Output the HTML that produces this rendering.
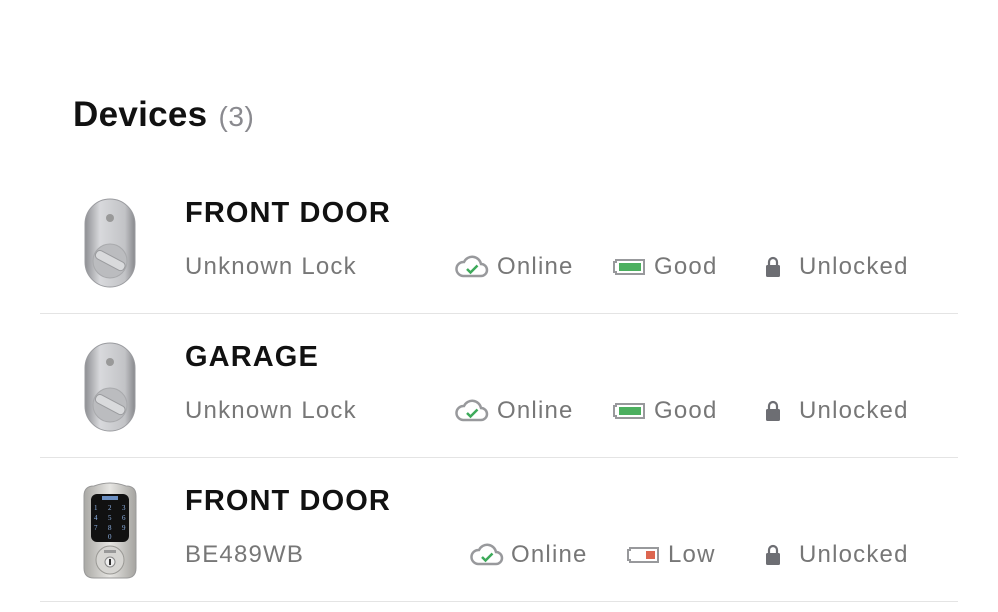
<!DOCTYPE html><html><head><style>
body{margin:0;width:998px;height:612px;background:#fff;font-family:"Liberation Sans",sans-serif;position:relative;overflow:hidden}
.a{position:absolute;white-space:nowrap}
.t{left:73px;top:95px;font-size:35px;font-weight:bold;color:#111;letter-spacing:0.3px}
.t span{font-weight:normal;color:#8a8a8f;font-size:28px;letter-spacing:0.6px;margin-left:11px}
.n{font-size:29px;font-weight:bold;color:#111;letter-spacing:1.1px}
.s{font-size:24px;color:#777;letter-spacing:1.2px}
.hr{position:absolute;left:40px;width:918px;height:1px;background:#e4e4e4}
</style></head><body>
<div class="a t">Devices<span>(3)</span></div>

<svg width="0" height="0" style="position:absolute"><defs>
<g id="lk"><linearGradient id="g1" x1="0" x2="1"><stop offset="0" stop-color="#8e8f93"/><stop offset=".3" stop-color="#d8d9dc"/><stop offset=".8" stop-color="#c2c3c6"/><stop offset="1" stop-color="#88898d"/></linearGradient>
<rect x="1" y="1" width="50" height="88" rx="25" fill="url(#g1)" stroke="#9a9b9f"/>
<circle cx="26" cy="20" r="4" fill="#999"/>
<circle cx="26" cy="63" r="17" fill="#bbbcbf" stroke="#a8a9ac"/>
<rect x="10" y="58" width="32" height="9" rx="4" fill="#d9dadc" stroke="#9a9b9e" transform="rotate(28 26 63)"/></g>
<g id="cl"><path d="M8 24 H26 a6 6 0 0 0 0-12 a9 9 0 0 0-17-2 a7 7 0 0 0-1 14z" fill="none" stroke="#98999c" stroke-width="2.5"/><path d="M12 17 l3.5 3.5 7-7" fill="none" stroke="#3daa5a" stroke-width="2.5"/></g>
<g id="pd"><rect x="4" y="9" width="14" height="12" rx="1.5" fill="#6d6e73"/><path d="M7 10 V6 a4 4 0 0 1 8 0 V10" fill="none" stroke="#6d6e73" stroke-width="2.2"/></g>
</defs></svg>

<!-- row1 -->
<svg class="a" style="left:84px;top:198px" width="52" height="90"><use href="#lk"/></svg>
<div class="a n" style="left:185px;top:197px">FRONT DOOR</div>
<div class="a s" style="left:185px;top:253px">Unknown Lock</div>
<svg class="a" style="left:455px;top:252px" width="36" height="30"><use href="#cl"/></svg>
<div class="a s" style="left:497px;top:253px">Online</div>
<svg class="a" style="left:612px;top:256px" width="36" height="22"><path d="M4 6 V4 H32 V18 H4 V16 H2 V6z" fill="none" stroke="#98999c" stroke-width="2"/><rect x="7" y="7" width="22" height="8" fill="#4caf5f"/></svg>
<div class="a s" style="left:654px;top:253px">Good</div>
<svg class="a" style="left:762px;top:256px" width="22" height="26"><use href="#pd"/></svg>
<div class="a s" style="left:799px;top:253px">Unlocked</div>
<div class="hr" style="top:313px"></div>

<!-- row2 -->
<svg class="a" style="left:84px;top:342px" width="52" height="90"><use href="#lk"/></svg>
<div class="a n" style="left:185px;top:341px">GARAGE</div>
<div class="a s" style="left:185px;top:397px">Unknown Lock</div>
<svg class="a" style="left:455px;top:396px" width="36" height="30"><use href="#cl"/></svg>
<div class="a s" style="left:497px;top:397px">Online</div>
<svg class="a" style="left:612px;top:400px" width="36" height="22"><path d="M4 6 V4 H32 V18 H4 V16 H2 V6z" fill="none" stroke="#98999c" stroke-width="2"/><rect x="7" y="7" width="22" height="8" fill="#4caf5f"/></svg>
<div class="a s" style="left:654px;top:397px">Good</div>
<svg class="a" style="left:762px;top:400px" width="22" height="26"><use href="#pd"/></svg>
<div class="a s" style="left:799px;top:397px">Unlocked</div>
<div class="hr" style="top:457px"></div>

<!-- row3 -->
<svg class="a" style="left:80px;top:482px" width="60" height="100">
<defs><linearGradient id="g2" x1="0" x2="1"><stop offset="0" stop-color="#a9a8a4"/><stop offset=".5" stop-color="#e6e5e2"/><stop offset="1" stop-color="#a5a4a0"/></linearGradient></defs>
<path d="M4 14 Q4 4 14 4 Q22 1 30 1 Q38 1 46 4 Q56 4 56 14 V86 Q56 96 46 96 H14 Q4 96 4 86z" fill="url(#g2)" stroke="#999"/>
<rect x="11" y="12" width="38" height="48" rx="6" fill="#111"/>
<rect x="22" y="14" width="16" height="4" fill="#6b8fc2"/>
<g fill="#8fb4e8" font-size="7" font-family="Liberation Serif"><text x="14" y="28">1</text><text x="28" y="28">2</text><text x="42" y="28">3</text><text x="14" y="38">4</text><text x="28" y="38">5</text><text x="42" y="38">6</text><text x="14" y="48">7</text><text x="28" y="48">8</text><text x="42" y="48">9</text><text x="28" y="57">0</text></g>
<circle cx="30" cy="78" r="14" fill="#d6d5d2" stroke="#9a9995"/><rect x="24" y="68" width="12" height="3" fill="#999"/><circle cx="30" cy="80" r="5" fill="#eee" stroke="#888"/><rect x="29" y="77" width="2" height="6" fill="#333"/>
</svg>
<div class="a n" style="left:185px;top:485px">FRONT DOOR</div>
<div class="a s" style="left:185px;top:541px">BE489WB</div>
<svg class="a" style="left:470px;top:540px" width="36" height="30"><use href="#cl"/></svg>
<div class="a s" style="left:511px;top:541px">Online</div>
<svg class="a" style="left:626px;top:544px" width="36" height="22"><path d="M4 6 V4 H32 V18 H4 V16 H2 V6z" fill="none" stroke="#98999c" stroke-width="2"/><rect x="20" y="7" width="9" height="8" fill="#dd6650"/></svg>
<div class="a s" style="left:668px;top:541px">Low</div>
<svg class="a" style="left:762px;top:544px" width="22" height="26"><use href="#pd"/></svg>
<div class="a s" style="left:799px;top:541px">Unlocked</div>
<div class="hr" style="top:601px"></div>
</body></html>
